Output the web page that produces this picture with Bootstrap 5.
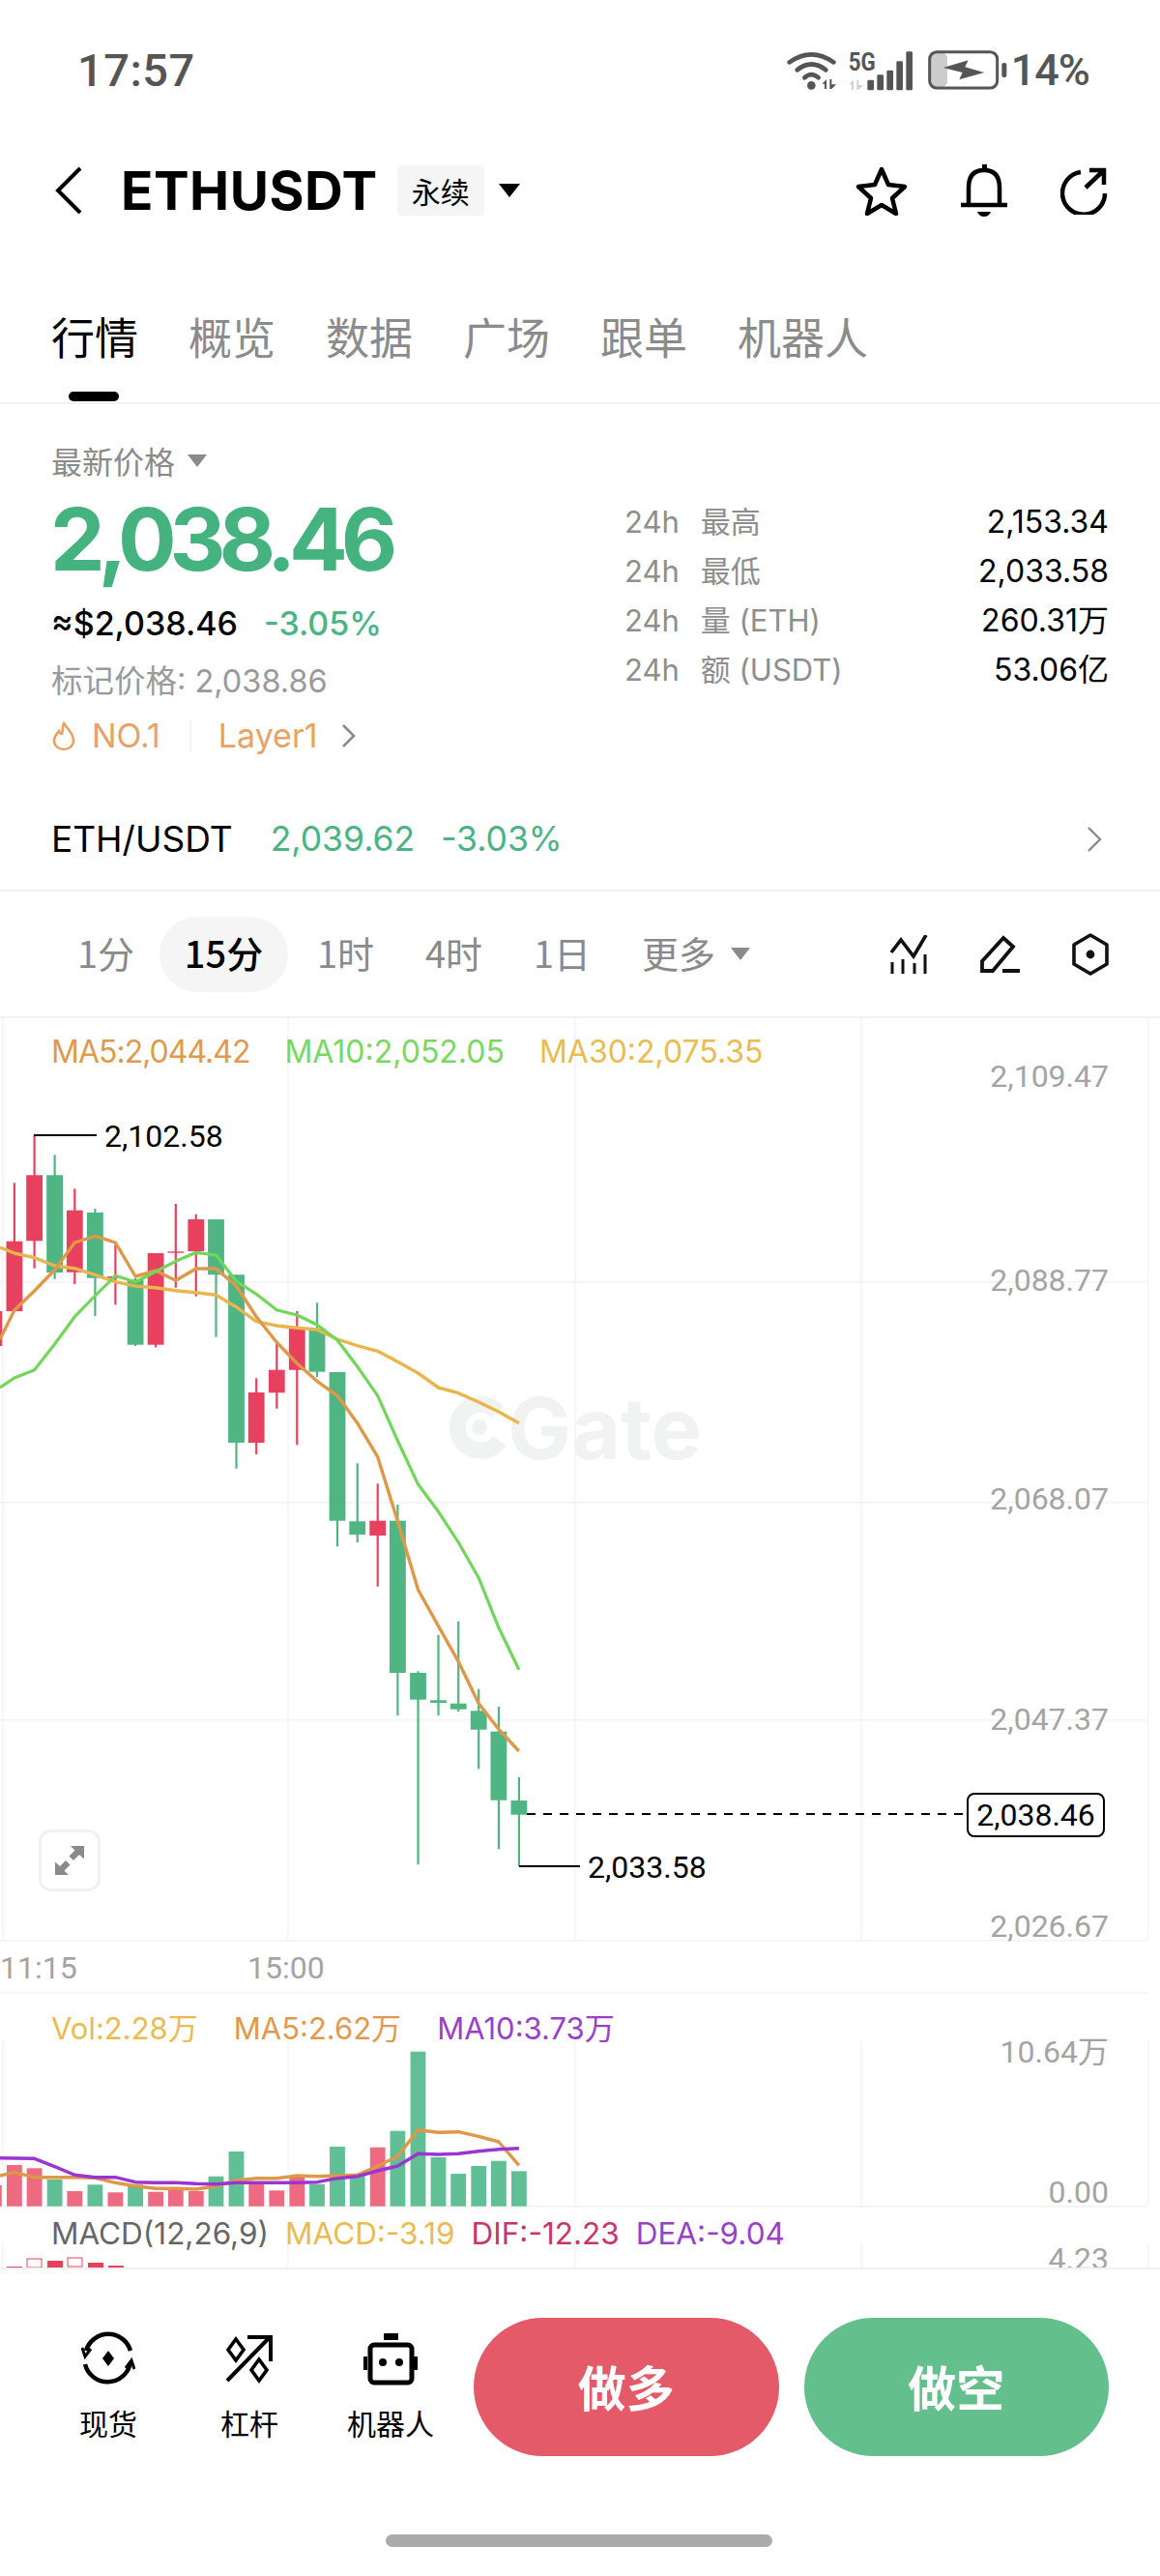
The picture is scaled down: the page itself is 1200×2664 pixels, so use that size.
<!DOCTYPE html>
<html lang="zh">
<head>
<meta charset="utf-8">
<title>ETHUSDT</title>
<link href="https://cdn.jsdelivr.net/npm/bootstrap@5.3.0/dist/css/bootstrap.min.css" rel="stylesheet">
<style>
html,body{margin:0;background:#fff}
body{width:1200px;height:2664px;overflow:hidden;font-family:Inter,"Noto Sans CJK SC",sans-serif;color:#000}
.cn{font-family:"Noto Sans CJK SC",sans-serif}
.sbar{height:100px;padding:46px 73px 0 80px;color:#555}
.sbar-time{font:500 47px/54px Roboto,sans-serif;letter-spacing:.5px}
.sbar-pct{font:500 45px/54px Roboto,sans-serif;margin-left:2px;letter-spacing:-1px}
.topbar{height:194px;padding:0 55px 0 57px}
.sym{font-weight:700;font-size:55px;line-height:70px;margin-left:40px;letter-spacing:.5px}
.perp{background:#f5f5f5;font-size:30px;line-height:52px;width:90px;text-align:center;margin-left:20px;border-radius:4px}
.tri{width:0;height:0;border-left:11px solid transparent;border-right:11px solid transparent;border-top:14px solid #000;margin-left:15px}
.tri-g{border-left-width:10px;border-right-width:10px;border-top:13px solid #8a8a8a;margin-left:13px}
.hicons{gap:54px}
.tabbar{height:124px;padding:28px 0 0 53px;gap:52px;border-bottom:2px solid #f3f3f3;font-size:45px;line-height:52px;color:#8b8b8b;position:relative}
.tab-on{color:#000;position:relative}
.tab-on::after{content:"";position:absolute;left:18px;top:83px;width:52px;height:10px;border-radius:5px;background:#000}
.quote{padding:0 53px;height:398px}
.qleft{padding-top:36px}
.lbl{font-size:32px;line-height:44px;color:#8a8a8a}
.price{font-weight:700;font-size:90px;line-height:100px;margin-top:10px;margin-left:-1px;color:#45b37f;letter-spacing:-7.100px}
.approx{font-size:34px;line-height:44px;margin-top:15px;gap:27px;font-weight:500}
.upg{color:#4ab483}
.markp{font-size:32.500px;line-height:44px;margin-top:16px;color:#9a9a9a}
.tags{font-size:34px;line-height:44px;margin-top:12px;color:#e8a266}
.tag-sep{width:2px;height:32px;background:#f2f2f2;margin:0 28px 0 30px}
.qright{width:501px;padding-top:96px}
.srow{height:51px;line-height:51px;font-size:31px}
.slab{color:#8e8e8e}
.slab b{font-weight:400;margin-right:22px}
.sval{font-weight:400;font-size:32px}
.pairrow{height:106px;padding:0 60px 0 53px;font-size:35.500px;border-bottom:2px solid #f1f1f1}
.pair-n{font-size:37px}
.pair-p{color:#4ab483;margin-left:39px}
.pair-c{color:#4ab483;margin-left:27px}
.ivals{height:131px;padding:0 52px 0 80px;border-bottom:2px solid #f1f1f1;font-size:38px;color:#8a8a8a}
.ival{width:58px;text-align:center;white-space:nowrap;margin-top:-4px}
.ival-on{background:#f5f5f5;color:#000;width:133px;height:78px;line-height:74px;border-radius:39px;margin:0 30px 0 27px;text-align:center;font-weight:500}
.ival-g{margin-right:54px}
.ival-more{margin-top:-4px}
.ival-more + .tri-g{margin-left:16px}
.ticons{margin-left:auto;gap:53px}
.chartbox{height:1294px;position:relative;border-bottom:2px solid #f1f1f1;overflow:hidden}
.chartbox svg{display:block}
.legend{position:absolute;left:53px;line-height:40px;white-space:nowrap}
.leg-a{top:15px;font-size:32px;gap:36px}
.tight{letter-spacing:-1px}
.leg-b{top:1025px;font-size:31px;gap:37px}
.leg-c{top:1237px;font-size:31.500px;gap:17px}
.axt{font-family:Roboto,"Noto Sans CJK SC",sans-serif;font-size:32px;fill:#a4a4a4}
.axk{font-family:Roboto,sans-serif;font-size:32px;fill:#000}
.wm{font-family:Inter,sans-serif;font-weight:700;font-size:88px;fill:#f1f3f3}
.foot{padding:50px 53px 0 39px}
.tool{width:146px;text-align:center;font-size:30px;line-height:40px}
.tool svg{display:block;margin:0 auto 18px}
.toolz{height:143px;margin-right:13px;padding-top:14px}
.act{width:316px;height:143px;border:0;border-radius:72px;color:#fff;font-size:50px;font-weight:700;line-height:141px;text-align:center}
.act-l{background:#e55a68;margin-right:26px}
.act-s{background:#63bf8c}
.homebar{width:400px;height:13px;border-radius:7px;background:#ababab;margin:81px 0 0 399px}
</style>
</head>
<body>

<div class="sbar d-flex justify-content-between align-items-start">
  <span class="sbar-time">17:57</span>
  <div class="d-flex align-items-start">
    <svg width="230" height="46" viewBox="105 60 690 138" style="margin-top:4px">
      <g fill="none" stroke="#555" stroke-width="14" stroke-linecap="round">
        <path d="M113 103Q181 55 250 103"/><path d="M137 127Q181 92 226 127"/><path d="M160 151Q181 132 203 151"/>
      </g>
      <circle cx="181" cy="175" r="13" fill="#555"/>
      <path d="M214 170l14-14v30h-6v-16zM238 156h6v16h14l-14 14h-6z" fill="#555"/>
      <text x="296" y="130" font-family="Roboto,sans-serif" font-weight="700" font-size="76" textLength="84" lengthAdjust="spacingAndGlyphs" fill="#555">5G</text>
      <path d="M298 172l14-14v30h-6v-16zM322 158h6v16h14l-14 14h-6z" fill="#d0d0d0"/>
      <g fill="#555"><rect x="355" y="158" width="20" height="32" rx="4"/><rect x="385" y="142" width="20" height="48" rx="4"/><rect x="415" y="128" width="20" height="62" rx="4"/><rect x="445" y="100" width="20" height="90" rx="4"/><rect x="475" y="70" width="20" height="120" rx="4"/></g>
      <rect x="551" y="74" width="52" height="105" rx="16" fill="#ccc"/>
      <rect x="548" y="71" width="210" height="112" rx="22" fill="none" stroke="#555" stroke-width="9"/>
      <path d="M590 120L668 97 658 118 718 135 640 157 650 135z" fill="#555"/>
      <rect x="772" y="105" width="15" height="45" rx="6" fill="#555"/>
    </svg>
    <span class="sbar-pct">14%</span>
  </div>
</div>

<div class="topbar d-flex align-items-center">
  <svg width="28" height="50" viewBox="0 0 28 50"><path d="M26 2L3 25l23 23" fill="none" stroke="#000" stroke-width="4"/></svg>
  <span class="sym">ETHUSDT</span>
  <span class="perp cn">永续</span>
  <span class="tri"></span>
  <div class="hicons d-flex align-items-center ms-auto">
    <svg width="54" height="52" viewBox="0 0 54 52"><path d="M27 4l7 16 17 2-13 12 4 16-15-9-15 9 4-16L3 22l17-2z" fill="none" stroke="#000" stroke-width="4.5" stroke-linejoin="round"/></svg>
    <svg width="50" height="54" viewBox="0 0 50 54"><path d="M9 42V24Q9 6 25 6t16 18v18" fill="none" stroke="#000" stroke-width="4.5"/><rect x="23" y="0" width="5" height="6" fill="#000"/><path d="M1 42h48" stroke="#000" stroke-width="4.5"/><path d="M18 49h14q-2 5-7 5t-7-5z" fill="#000"/></svg>
    <svg width="48" height="50" viewBox="0 0 48 50"><path d="M21 6A22 22 0 1 0 46 28" fill="none" stroke="#000" stroke-width="4.5"/><path d="M26 22L44 5M30 4h15v15" fill="none" stroke="#000" stroke-width="4.5"/></svg>
  </div>
</div>

<div class="tabbar d-flex cn">
  <span class="tab-on">行情</span><span>概览</span><span>数据</span><span>广场</span><span>跟单</span><span>机器人</span>
</div>

<div class="quote d-flex justify-content-between">
  <div class="qleft">
    <div class="lbl cn d-flex align-items-center">最新价格<span class="tri tri-g"></span></div>
    <div class="price">2,038.46</div>
    <div class="approx d-flex"><span>≈$2,038.46</span><span class="upg">-3.05%</span></div>
    <div class="markp">标记价格: 2,038.86</div>
    <div class="tags d-flex align-items-center">
      <svg width="26" height="32" viewBox="0 0 26 32" class="me-3"><path d="M13 2c1 5 10 10 10 19a10 9 0 0 1-20 0c0-5 3-7 5-10 1 2 2 3 3 3 1-4 1-8 2-12z" fill="none" stroke="#e8a266" stroke-width="2.6"/></svg>
      <span>NO.1</span><span class="tag-sep"></span><span>Layer1</span>
      <svg width="16" height="26" viewBox="0 0 16 26" class="ms-4"><path d="M2 2l11 11L2 24" fill="none" stroke="#8a8a8a" stroke-width="2.6"/></svg>
    </div>
  </div>
  <div class="qright">
    <div class="srow d-flex justify-content-between"><span class="slab"><b>24h</b>最高</span><span class="sval">2,153.34</span></div>
    <div class="srow d-flex justify-content-between"><span class="slab"><b>24h</b>最低</span><span class="sval">2,033.58</span></div>
    <div class="srow d-flex justify-content-between"><span class="slab"><b>24h</b>量 (ETH)</span><span class="sval">260.31万</span></div>
    <div class="srow d-flex justify-content-between"><span class="slab"><b>24h</b>额 (USDT)</span><span class="sval">53.06亿</span></div>
  </div>
</div>

<div class="pairrow d-flex align-items-center">
  <span class="pair-n">ETH/USDT</span><span class="pair-p">2,039.62</span><span class="pair-c">-3.03%</span>
  <svg width="16" height="28" viewBox="0 0 16 28" class="ms-auto"><path d="M2 2l12 12L2 26" fill="none" stroke="#8a8a8a" stroke-width="2.4"/></svg>
</div>

<div class="ivals d-flex align-items-center cn">
  <span class="ival">1分</span><span class="ival-on">15分</span><span class="ival ival-g">1时</span><span class="ival ival-g">4时</span><span class="ival ival-g">1日</span><span class="ival-more">更多</span><span class="tri tri-g"></span>
  <div class="ticons d-flex align-items-center">
    <svg width="40" height="40" viewBox="0 0 40 40"><path d="M2 18L12 5 25 22 38 0" fill="none" stroke="#111" stroke-width="3.6"/><path d="M3 28v12M14 25v15M26 29v11M37 20v20" stroke="#111" stroke-width="3"/></svg>
    <svg width="42" height="40" viewBox="0 0 42 40"><path d="M3 37V27L25 3l10 9-21 25zM24 37h18" fill="none" stroke="#111" stroke-width="3.8"/></svg>
    <svg width="40" height="44" viewBox="0 0 40 44"><path d="M20 2l17 10v20L20 42 3 32V12z" fill="none" stroke="#111" stroke-width="3.6" stroke-linejoin="round"/><circle cx="20" cy="22" r="4.4" fill="#111"/></svg>
  </div>
</div>

<div class="chartbox">
  <svg id="chart" width="1200" height="1292" viewBox="0 1053 1200 1292"></svg>
  <div class="legend leg-a d-flex"><span class="tight" style="color:#e09a50">MA5:2,044.42</span><span style="color:#78d860">MA10:2,052.05</span><span style="color:#e9bb50">MA30:2,075.35</span></div>
  <div class="legend leg-b d-flex"><span style="color:#e9bb50">Vol:2.28万</span><span style="color:#e09a50">MA5:2.62万</span><span style="color:#9a3fc8">MA10:3.73万</span></div>
  <div class="legend leg-c d-flex"><span style="color:#666">MACD(12,26,9)</span><span style="color:#e9bb50">MACD:-3.19</span><span style="color:#c9356b">DIF:-12.23</span><span style="color:#9a3fc8">DEA:-9.04</span></div>
</div>

<div class="foot d-flex align-items-start">
  <div class="toolz d-flex cn">
    <div class="tool">
      <svg width="56" height="56" viewBox="0 0 56 56"><path d="M5 20A24 24 0 0 1 51 20M51 32A24 24 0 0 1 4 34" fill="none" stroke="#000" stroke-width="4.5"/><path d="M46 38l6-8 3 9M10 18L4 26 1 17" fill="none" stroke="#000" stroke-width="3"/><path d="M28 20l6 8-6 8-6-8z" fill="#000"/></svg>
      现货
    </div>
    <div class="tool">
      <svg width="50" height="56" viewBox="0 -4 50 56"><path d="M2 47L46 2M23 2h24v25" fill="none" stroke="#000" stroke-width="4"/><path d="M11 4l8 11-8 11-8-11zM35 25l8 11-8 11-8-11z" fill="none" stroke="#000" stroke-width="3.6"/></svg>
      杠杆
    </div>
    <div class="tool">
      <svg width="56" height="56" viewBox="0 -2 56 56"><rect x="21" y="0" width="15" height="7" rx="1" fill="#000"/><rect x="7" y="12" width="43" height="39" rx="4" fill="none" stroke="#000" stroke-width="5"/><path d="M2 24v14M54 24v14" stroke="#000" stroke-width="4"/><circle cx="20" cy="30" r="4" fill="#000"/><circle cx="37" cy="30" r="4" fill="#000"/></svg>
      机器人
    </div>
  </div>
  <div class="act act-l cn">做多</div>
  <div class="act act-s cn">做空</div>
</div>
<div class="homebar"></div>

<script>
var R='#e8405f',G='#4eb583';
var C=[[-16,1,888,996,888,996],[39,1,490,888,671,888],[93,1,342,755,466,670],[148,0,403,788,466,768],[202,1,508,804,575,767],[257,0,570,903,582,785],[312,1,680,868,780,785],[366,0,785,996,790,992],[421,1,708,1000,708,992],[475,1,555,815,703,707],[530,1,587,842,603,702],[584,0,603,968,603,775],[639,0,775,1376,775,1296],[693,1,1096,1332,1140,1296],[748,1,980,1190,1070,1141],[803,1,888,1303,942,1070],[857,0,862,1092,942,1076],[912,0,1077,1618,1077,1538],[966,0,1360,1605,1540,1581],[1021,1,1423,1742,1538,1584],[1075,0,1488,2142,1538,2010],[1130,0,2005,2605,2010,2093],[1185,0,1892,2142,2095,2103],[1239,0,1850,2130,2105,2123],[1294,0,2060,2308,2128,2186],[1348,0,2115,2557,2192,2405],[1403,0,2334,2610,2406,2450]];
var MA5=[[0,975],[39,885],[93,825],[148,760],[202,675],[257,655],[312,675],[366,780],[421,762],[475,793],[530,756],[584,756],[639,810],[693,905],[748,985],[803,1050],[857,1105],[912,1150],[966,1235],[1021,1340],[1075,1540],[1130,1752],[1185,1865],[1239,1975],[1294,2105],[1348,2185],[1403,2253]];
var MA10=[[0,1125],[39,1095],[93,1070],[148,990],[202,905],[257,840],[312,778],[366,797],[421,765],[475,733],[530,706],[584,714],[639,795],[693,835],[748,884],[803,900],[857,930],[912,978],[966,1060],[1021,1150],[1075,1290],[1130,1425],[1185,1510],[1239,1605],[1294,1715],[1348,1870],[1403,2000]];
var MA30=[[0,690],[39,708],[93,722],[148,747],[202,755],[257,775],[312,797],[366,810],[421,815],[475,824],[530,830],[584,838],[639,875],[693,920],[748,933],[803,940],[857,945],[912,975],[966,995],[1021,1012],[1075,1045],[1130,1080],[1185,1125],[1239,1142],[1294,1170],[1348,1200],[1403,1235]];
var V=[[-16,780,1],[39,717,1],[93,727,1],[148,762,0],[202,798,1],[257,778,0],[312,802,1],[366,778,0],[421,800,1],[475,790,1],[530,798,1],[584,752,0],[639,675,0],[693,770,1],[748,796,1],[803,750,1],[857,776,0],[912,660,0],[966,750,0],[1021,662,1],[1075,611,0],[1130,365,0],[1185,693,0],[1239,744,0],[1294,720,0],[1348,704,0],[1403,736,0]];
var VM5=[[0,750],[39,740],[93,755],[148,755],[202,755],[257,757],[312,772],[366,782],[421,790],[475,790],[530,792],[584,782],[639,765],[693,758],[748,758],[803,750],[857,752],[912,750],[966,748],[1021,720],[1075,690],[1130,608],[1185,616],[1239,614],[1294,628],[1348,645],[1403,718]];
var VM10=[[0,695],[93,697],[148,722],[202,748],[257,755],[312,755],[366,770],[421,772],[475,772],[530,775],[584,776],[639,772],[693,772],[748,772],[803,772],[857,770],[912,758],[966,752],[1021,735],[1075,720],[1130,682],[1185,684],[1239,682],[1294,674],[1348,668],[1403,665]];
function X(x){return +(x/2.613).toFixed(1)}
function Y(y){return +(y/3+1060).toFixed(1)}
function W(y){return +(y/3+2000).toFixed(1)}
function rect(x,y,w,h,f){return '<rect x="'+x+'" y="'+y+'" width="'+w+'" height="'+h+'" fill="'+f+'"/>'}
function line(pts,fy,c,w){return '<polyline fill="none" stroke="'+c+'" stroke-width="'+w+'" stroke-linejoin="round" points="'+pts.map(function(p){return X(p[0])+','+fy(p[1])}).join(' ')+'"/>'}
function txt(x,y,s,cl,a){return '<text x="'+x+'" y="'+y+'" class="'+cl+'"'+(a?' text-anchor="end"':'')+'>'+s+'</text>'}
var s='';
[2,297,594,890,1187].forEach(function(x){s+=rect(x,1053,1.5,953,'#f5f5f5');s+=rect(x,2110,1.5,171,'#f5f5f5');s+=rect(x,2320,1.5,25,'#f5f5f5')});
[1325,1553,1778,2006,2060,2281].forEach(function(y){s+=rect(0,y,1187,1.5,'#f3f3f3')});
s+='<path d="M515 1460A24 24 0 1 0 517 1490" fill="none" stroke="#f1f3f3" stroke-width="17"/><circle cx="496" cy="1476" r="8" fill="#f1f3f3"/>';
s+=txt(525,1509,'Gate','wm');
C.forEach(function(c){var f=c[1]?R:G,x=X(c[0]);s+=rect(x-1.1,Y(c[2]),2.2,+(Y(c[3])-Y(c[2])).toFixed(1),f);s+=rect(x-8.4,Y(c[4]),16.8,+(Y(c[5])-Y(c[4])).toFixed(1),f)});
s+=line(MA30,Y,'#e9b64e',3.4)+line(MA5,Y,'#df9848',3.4)+line(MA10,Y,'#72d65a',3.2);
s+='<path d="M35 1174H100M537 1930H600" stroke="#000" stroke-width="2"/><path d="M545 1876H1001" stroke="#000" stroke-width="2" stroke-dasharray="9 8"/>';
s+=txt(108,1186,'2,102.58','axk')+txt(608,1942,'2,033.58','axk');
s+='<rect x="1001" y="1855" width="141" height="44" rx="7" fill="#fff" stroke="#000" stroke-width="2"/>'+txt(1071.5,1888,'2,038.46','axk').replace('<text','<text text-anchor="middle"');
[[1124,'2,109.47'],[1335,'2,088.77'],[1561,'2,068.07'],[1789,'2,047.37'],[2003,'2,026.67'],[2133,'10.64万'],[2278,'0.00'],[2347,'4.23']].forEach(function(a){s+=txt(1147,a[0],a[1],'axt',1)});
s+=txt(0,2046,'11:15','axt')+txt(256,2046,'15:00','axt');
s+='<rect x="41.5" y="1893.5" width="61" height="61" rx="11" fill="#fff" stroke="#f1f1f1" stroke-width="3"/><path d="M73 1909h14v13.500l-5-4.500-6 6-4.500-4.500 6-6zM71 1939h-14v-13.500l5 4.500 6-6 4.500 4.500-6 6z" fill="#8a8a8a"/>';
V.forEach(function(v){var x=X(v[0]);s+=rect(x-7.9,W(v[1]),15.8,+(W(845)-W(v[1])).toFixed(1),v[2]?'#ee6a80':'#60bf95')});
s+=line(VM5,W,'#df9848',3.4)+line(VM10,W,'#9a35cf',3.4);
s+=rect(7,2344,16,1,'#e8405f');
[[28,2336,0],[49,2338,1],[70,2335,0],[91,2340,1],[112,2343,1]].forEach(function(m){s+=m[2]?rect(m[0],m[1],16,7,'#e8405f'):'<rect x="'+m[0]+'" y="'+m[1]+'" width="15" height="9" fill="#fff" stroke="#e8405f" stroke-width="1"/>'});
document.getElementById('chart').innerHTML=s;
</script>
<script src="https://cdn.jsdelivr.net/npm/bootstrap@5.3.0/dist/js/bootstrap.bundle.min.js"></script>
</body>
</html>
